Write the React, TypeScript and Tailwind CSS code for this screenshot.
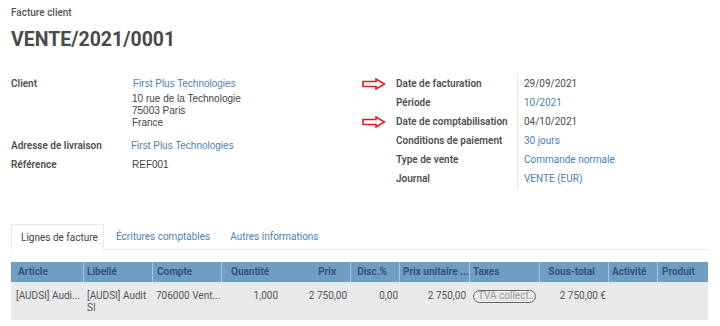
import React from "react";

const roboto = { fontFamily: "Roboto, 'Liberation Sans', sans-serif" };
const arial = { fontFamily: "'Liberation Sans', Arial, sans-serif" };

function Arrow() {
  return (
    <svg width="24" height="12" viewBox="0 0 24 12">
      <polygon
        points="1,3.5 14,3.5 14,1 22.5,6 14,11 14,8.5 1,8.5"
        fill="white"
        stroke="#e0201c"
        strokeWidth="1.6"
        strokeLinejoin="miter"
      />
    </svg>
  );
}

const rightRows: { label: string; value: string; link?: boolean; arrow?: boolean }[] = [
  { label: "Date de facturation", value: "29/09/2021", arrow: true },
  { label: "Période", value: "10/2021", link: true },
  { label: "Date de comptabilisation", value: "04/10/2021", arrow: true },
  { label: "Conditions de paiement", value: "30 jours", link: true },
  { label: "Type de vente", value: "Commande normale", link: true },
  { label: "Journal", value: "VENTE (EUR)", link: true },
];

export default function App() {
  return (
    <div
      className="w-[720px] h-[326px] overflow-hidden bg-white text-[#4c4c4c] pl-[11px] whitespace-nowrap"
      style={roboto}
    >
      <div className="pt-[6px] h-[20px] text-[10px] leading-[14px] font-medium text-[#555]">
        Facture client
      </div>
      <div className="mt-[8px] h-[24px] text-[19.5px] leading-[24px] font-bold text-[#4a4a4a]">
        VENTE/2021/0001
      </div>

      <div className="mt-[22px] flex h-[132px]">
        <div className="w-[351px] text-[10px]">
          <div className="flex">
            <div className="w-[121px] h-[19px] leading-[19px] font-semibold text-[#505050]">Client</div>
            <div>
              <div className="h-[19px] leading-[19px] text-[#4b81b3] pl-px" style={arial}>
                First Plus Technologies
              </div>
              <div className="leading-[12px] text-[#444]" style={arial}>
                <div>10 rue de la Technologie</div>
                <div>75003 Paris</div>
                <div>France</div>
              </div>
            </div>
          </div>
          <div className="mt-[7px] flex h-[19px] leading-[19px]">
            <div className="w-[120px] font-semibold text-[#505050]">Adresse de livraison</div>
            <div className="text-[#4b81b3]" style={arial}>
              First Plus Technologies
            </div>
          </div>
          <div className="flex h-[19px] leading-[19px]">
            <div className="w-[121px] font-semibold text-[#505050]">Référence</div>
            <div className="text-[#444]" style={arial}>
              REF001
            </div>
          </div>
        </div>

        <div className="text-[10px]">
          {rightRows.map((r, i) => (
            <div key={i} className="flex h-[19px] items-center">
              <div className="w-[34px] flex items-center">{r.arrow ? <Arrow /> : null}</div>
              <div className="w-[121px] font-semibold text-[#505050] leading-[19px]">{r.label}</div>
              <div
                className={
                  "h-[19px] leading-[19px] border-l border-[#e6e6e6] pl-[6px] " +
                  (r.link ? "text-[#4b81b3]" : "text-[#4c4c4c]")
                }
              >
                {r.value}
              </div>
            </div>
          ))}
        </div>
      </div>

      <div className="mt-[18px] w-[697px] flex h-[26px] border-b border-[#e8e8e8] text-[10px]">
        <div className="w-[93px] h-[26px] border border-b-0 border-[#e8e8e8] bg-white flex items-center pl-[9px] text-[#444]">
          Lignes de facture
        </div>
        <div className="ml-[12px] flex items-center text-[#4b81b3]">Écritures comptables</div>
        <div className="ml-[20px] flex items-center text-[#4b81b3]">Autres informations</div>
      </div>

      <div className="mt-[12px] w-[697px] text-[10px]">
        <div className="flex h-[20px] bg-[#709ec3] text-[#32527a] font-bold leading-[20px]">
          <div className="w-[73px] pl-[7px] border-r border-[#a8c5dc]">Article</div>
          <div className="w-[69px] pl-[3px] border-r border-[#a8c5dc]">Libellé</div>
          <div className="w-[69px] pl-[4px] border-r border-[#a8c5dc]">Compte</div>
          <div className="w-[60px] pl-[9px]">Quantité</div>
          <div className="w-[69px] pr-[14px] text-right border-r border-[#a8c5dc]">Prix</div>
          <div className="w-[49px] pr-[12px] text-right border-r border-[#a8c5dc]">Disc.%</div>
          <div className="w-[70px] pl-[3px] border-r border-[#a8c5dc] overflow-hidden">Prix unitaire ...</div>
          <div className="w-[70px] pl-[3px] border-r border-[#a8c5dc]">Taxes</div>
          <div className="w-[69px] pr-[13px] text-right border-r border-[#a8c5dc]">Sous-total</div>
          <div className="w-[49px] pl-[3px] border-r border-[#a8c5dc]">Activité</div>
          <div className="w-[49px] pl-[4px]">Produit</div>
        </div>
        <div className="flex h-[38px] bg-[#e8e9eb] text-[#555] pt-[8px] leading-[12px]">
          <div className="w-[73px] pl-[5px]">[AUDSI] Audi...</div>
          <div className="w-[69px] pl-[3px] whitespace-normal">[AUDSI] Audit<br />SI</div>
          <div className="w-[69px] pl-[3px]">706000 Vent...</div>
          <div className="w-[60px] pr-[4px] text-right">1,000</div>
          <div className="w-[69px] pr-[4px] text-right">2 750,00</div>
          <div className="w-[49px] pr-[2px] text-right">0,00</div>
          <div className="w-[70px] pr-[4px] text-right">2 750,00</div>
          <div className="w-[70px] pl-[3px]">
            <span className="inline-flex items-center h-[13px] w-[63px] -mt-[1px] rounded-full border-[1.5px] border-[#6a6a6a] text-[#999] pl-[4px] text-[10px] leading-[10px]">
              TVA collect...
            </span>
          </div>
          <div className="w-[69px] pr-[3px] text-right">2 750,00 €</div>
          <div className="w-[49px]"></div>
          <div className="w-[49px]"></div>
        </div>
      </div>
    </div>
  );
}
